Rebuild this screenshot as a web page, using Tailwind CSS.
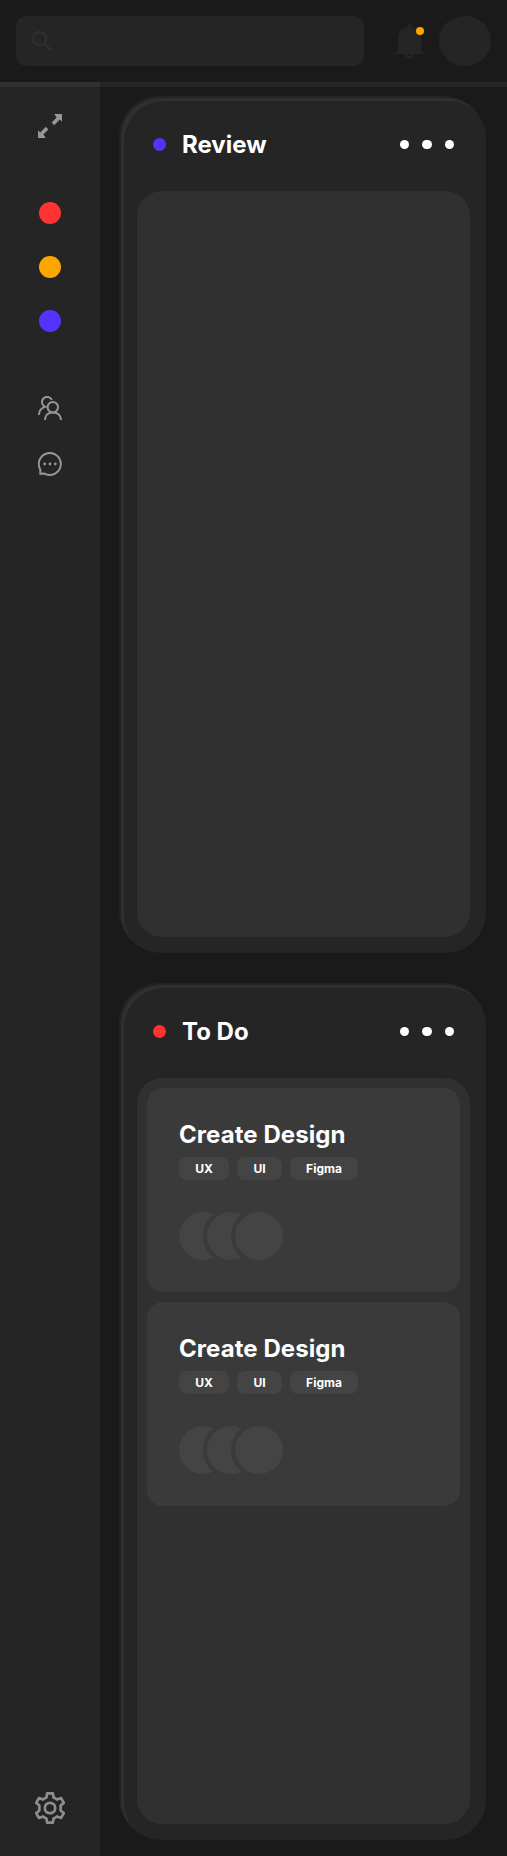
<!DOCTYPE html>
<html lang="en">
<head>
<meta charset="utf-8">
<title>Board</title>
<script src="https://cdn.jsdelivr.net/npm/@tailwindcss/browser@4"></script>
</head>
<body class="bg-[#1a1a1a] font-['Inter',sans-serif] text-white">
<div class="flex h-[1856px] w-[507px] flex-col overflow-hidden">
  <header class="flex h-[82px] shrink-0 items-center pl-4 pr-4">
    <div class="flex h-[50px] w-[347.5px] items-center rounded-[10px] bg-[#252525] pl-4">
      <svg class="size-5" viewBox="0 0 20 20" fill="none" stroke="#303030" stroke-width="2"><circle cx="7.5" cy="7.5" r="6.6"/><path d="M12.2 12.2 19.4 19.4" stroke-width="2.2"/></svg>
    </div>
    <div class="relative ml-[31.5px] h-9 w-[29px]">
      <svg class="h-9 w-[29px]" viewBox="0 0 29 36"><path d="M14.5.5a1.7 1.7 0 0 1 1.7 1.7v1.5C22 4.500 26.300 9 26.300 14.500V28H27.500a1.500 1.500 0 0 1 0 3H1.500a1.500 1.500 0 0 1 0-3H3V14.500C3 9 7 4.500 12.800 3.700V2.200A1.700 1.700 0 0 1 14.500.5Z" fill="#252525"/><path d="M11.200 31a3.300 3.300 0 0 0 6.600 0" fill="none" stroke="#252525" stroke-width="2.500"/></svg>
      <span class="absolute left-[21px] top-1 size-[7.5px] rounded-full bg-[#ffa500]"></span>
    </div>
    <div class="ml-auto h-[50px] w-[52px] rounded-full bg-[#252525]"></div>
  </header>
  <div class="flex h-[5px] shrink-0"><div class="w-[100px] bg-[#303030]"></div><div class="flex-1 bg-[#252525]"></div></div>
  <div class="flex min-h-0 flex-1">
    <aside class="flex w-[100px] shrink-0 flex-col items-center bg-[#252525] pb-8 pt-[27px]">
      <svg class="size-6" viewBox="0 0 24 24" fill="#969696"><path d="M16.300 0H24v7.700l-2.200-2.100-5.600 5.600-2.600-2.600 5-5Z"/><path d="M0 16.300 2.200 18.400 7.800 12.800l2.600 2.600-5 5L7.700 24H0Z"/></svg>
      <div class="mt-16 flex flex-col gap-8">
        <span class="size-[22px] rounded-full bg-[#ff3333]"></span>
        <span class="size-[22px] rounded-full bg-[#ffa500]"></span>
        <span class="size-[22px] rounded-full bg-[#5533ff]"></span>
      </div>
      <svg class="mt-16 size-6" viewBox="0 0 24 24" fill="none" stroke="#969696" stroke-width="2"><circle cx="14.800" cy="11.200" r="5.200"/><path d="M6.900 24C6.900 19.500 10 16.400 14.900 16.400S23 19.500 23 24"/><path d="M13.900 3.900A5.200 5.200 0 1 0 7.200 10.900C3.500 12 1 15 1 18.900"/></svg>
      <svg class="mt-8 size-6" viewBox="0 0 24 24" fill="none" stroke="#969696" stroke-width="2"><path d="M6.500 21.600A11 11 0 1 0 2.300 17.500V21.700Z"/><g fill="#969696" stroke="none"><circle cx="6.700" cy="12" r="1.400"/><circle cx="12" cy="12" r="1.400"/><circle cx="17.300" cy="12" r="1.400"/></g></svg>
      <svg class="mt-auto h-8 w-[30px]" viewBox="0 0 30 32" fill="none" stroke="#8e8e8e" stroke-width="2.700" stroke-linejoin="round"><circle cx="15" cy="16" r="5.200"/><path d="M12.200 1.300h5.600l.8 4.300q1.900.7 3.400 2l4.100-1.500 2.700 4.700-3.300 2.900q.4 2.300 0 4.600l3.300 2.900-2.700 4.700-4.100-1.500q-1.500 1.300-3.400 2l-.8 4.300h-5.600l-.8-4.300q-1.900-.7-3.400-2l-4.100 1.500-2.700-4.700 3.300-2.900q-.4-2.300 0-4.600l-3.300-2.900 2.700-4.700L8 7.600q1.500-1.300 3.400-2Z"/></svg>
    </aside>
    <main class="flex flex-1 flex-col gap-8 pl-[21px] pt-[11px]">
      <section class="flex h-[855px] w-[365px] shrink-0 flex-col rounded-[40px] bg-[#252525] px-4 pb-4 shadow-[inset_3px_3px_0_#303030,-2px_-2px_1px_#252525]">
        <div class="flex h-[93px] items-center pl-4 pr-4">
          <span class="size-[13px] rounded-full bg-[#5533ff]"></span>
          <h2 class="ml-4 text-2xl font-bold leading-[29px]">Review</h2>
          <div class="ml-auto flex gap-[13px]"><span class="size-[9.500px] rounded-full bg-white"></span><span class="size-[9.500px] rounded-full bg-white"></span><span class="size-[9.500px] rounded-full bg-white"></span></div>
        </div>
        <div class="flex-1 rounded-[25px] bg-[#303030]"></div>
      </section>
      <section class="flex h-[855px] w-[365px] shrink-0 flex-col rounded-[40px] bg-[#252525] px-4 pb-4 shadow-[inset_3px_3px_0_#303030,-2px_-2px_1px_#252525]">
        <div class="flex h-[93px] items-center pl-4 pr-4">
          <span class="size-[13px] rounded-full bg-[#ff3333]"></span>
          <h2 class="ml-4 text-2xl font-bold leading-[29px]">To Do</h2>
          <div class="ml-auto flex gap-[13px]"><span class="size-[9.500px] rounded-full bg-white"></span><span class="size-[9.500px] rounded-full bg-white"></span><span class="size-[9.500px] rounded-full bg-white"></span></div>
        </div>
        <div class="flex flex-1 flex-col gap-2.5 rounded-[25px] bg-[#303030] p-2.5">
          <article class="h-[204px] rounded-2xl bg-[#3a3a3a] p-8">
            <h3 class="text-2xl font-bold leading-[29px] tracking-[0.07px]">Create Design</h3>
            <div class="mt-2 flex gap-2 text-center text-xs font-bold leading-[15px]"><span class="w-[50px] rounded-lg bg-[#444444] py-1">UX</span><span class="w-[45px] rounded-lg bg-[#444444] py-1">UI</span><span class="w-[68px] rounded-lg bg-[#444444] py-1">Figma</span></div>
            <div class="mt-8 flex -space-x-5"><span class="size-12 rounded-full bg-[#444444]"></span><span class="size-12 rounded-full bg-[#444444] ring-4 ring-[#3a3a3a]"></span><span class="size-12 rounded-full bg-[#444444] ring-4 ring-[#3a3a3a]"></span></div>
          </article>
          <article class="h-[204px] rounded-2xl bg-[#3a3a3a] p-8">
            <h3 class="text-2xl font-bold leading-[29px] tracking-[0.07px]">Create Design</h3>
            <div class="mt-2 flex gap-2 text-center text-xs font-bold leading-[15px]"><span class="w-[50px] rounded-lg bg-[#444444] py-1">UX</span><span class="w-[45px] rounded-lg bg-[#444444] py-1">UI</span><span class="w-[68px] rounded-lg bg-[#444444] py-1">Figma</span></div>
            <div class="mt-8 flex -space-x-5"><span class="size-12 rounded-full bg-[#444444]"></span><span class="size-12 rounded-full bg-[#444444] ring-4 ring-[#3a3a3a]"></span><span class="size-12 rounded-full bg-[#444444] ring-4 ring-[#3a3a3a]"></span></div>
          </article>
        </div>
      </section>
    </main>
  </div>
</div>
</body>
</html>
